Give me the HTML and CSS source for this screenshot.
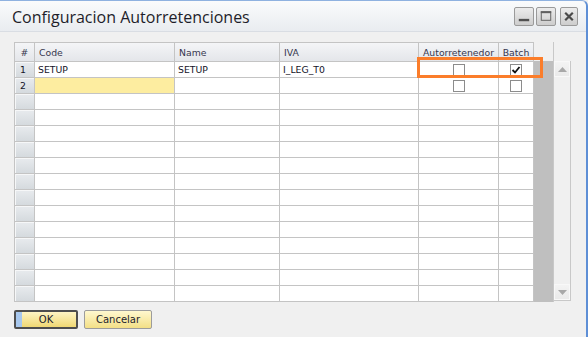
FILE: index.html
```html
<!DOCTYPE html>
<html lang="es">
<head>
  <meta charset="UTF-8" />
  <title>Configuracion Autorretenciones</title>
  <link rel="stylesheet" href="styles.css">
</head>
<body>
  <div class="window">
    <div class="titlebar">
      <span class="title">Configuracion Autorretenciones</span>
      <div class="win-buttons">
        <span class="win-btn"><svg width="19" height="19" viewBox="0 0 19 19"><rect x="4" y="12" width="11" height="2.5" fill="#505050"/></svg></span>
        <span class="win-btn"><svg width="19" height="19" viewBox="0 0 19 19"><rect x="4.5" y="4.5" width="10" height="9" fill="none" stroke="#606060" stroke-width="1"/><rect x="4" y="4" width="11" height="2" fill="#606060"/></svg></span>
        <span class="win-btn close"><svg width="19" height="19" viewBox="0 0 19 19"><path d="M5 5 L14 14 M14 5 L5 14" stroke="#4a4a4a" stroke-width="2.6"/></svg></span>
      </div>
    </div>

    <div class="content">
      <div class="grid-wrap">
        <div class="grid" id="grid">
          <div class="hd num">#</div>
          <div class="hd">Code</div>
          <div class="hd">Name</div>
          <div class="hd">IVA</div>
          <div class="hd center">Autorretenedor</div>
          <div class="hd center">Batch</div>

          <div class="rn">1</div>
          <div class="cell">SETUP</div>
          <div class="cell">SETUP</div>
          <div class="cell">I_LEG_T0</div>
          <div class="cell center"><span class="chk"></span></div>
          <div class="cell center"><span class="chk"><svg width="10" height="10" viewBox="0 0 10 10"><path d="M1.5 5 L4 7.5 L8.5 2" fill="none" stroke="#111" stroke-width="1.8"/></svg></span></div>

          <div class="rn">2</div>
          <div class="cell active"></div>
          <div class="cell"></div>
          <div class="cell"></div>
          <div class="cell center"><span class="chk"></span></div>
          <div class="cell center"><span class="chk"></span></div>
        </div>

        <div class="filler">
          <div class="filler-head"></div>
          <div class="filler-body"></div>
        </div>

        <div class="scroll-col">
          <div class="scroll-head"></div>
          <div class="scrollbar">
            <div class="sb-btn"><svg width="9" height="5" viewBox="0 0 9 5"><path d="M0 5 L4.5 0 L9 5 Z" fill="#a8a8a8"/></svg></div>
            <div class="sb-track"></div>
            <div class="sb-btn"><svg width="9" height="5" viewBox="0 0 9 5"><path d="M0 0 L9 0 L4.5 5 Z" fill="#a8a8a8"/></svg></div>
          </div>
        </div>

        <div class="highlight"></div>
      </div>

      <div class="actions">
        <button class="btn ok">OK</button>
        <button class="btn">Cancelar</button>
      </div>
    </div>
  </div>

  <script>
    // fill the rest of the matrix with empty rows
    const grid = document.getElementById("grid");
    for (let i = 3; i <= 15; i++) {
      grid.insertAdjacentHTML("beforeend",
        '<div class="rn"></div><div class="cell"></div><div class="cell"></div>' +
        '<div class="cell"></div><div class="cell"></div><div class="cell"></div>');
    }
  </script>
</body>
</html>
```

FILE: styles.css
```css
html, body {
  margin: 0;
  padding: 0;
}

body {
  width: 588px;
  height: 337px;
  overflow: hidden;
  background-color: #f0f0f0;
}

.window {
  box-sizing: border-box;
  width: 588px;
  height: 337px;
  background-color: #f0f0f0;
  border-top: 1px solid #8fb2e0;
  border-right: 2px solid #5e8fd6;
  border-top-right-radius: 6px;
  font-family: "DejaVu Sans", Tahoma, sans-serif;
  font-size: 9.3px;
  color: #141428;
}

.titlebar {
  height: 30px;
  display: flex;
  align-items: center;
  justify-content: space-between;
  padding: 0 8px 0 12px;
  background: linear-gradient(#fafbfc, #e9ecf0);
  border-bottom: 1px solid #d9dde3;
  border-top-right-radius: 6px;
}

.title {
  font-family: "Open Sans", sans-serif;
  font-size: 16px;
  color: #1e1e2a;
  margin-top: 1px;
}

.win-buttons {
  display: flex;
  gap: 2px;
  margin-top: 1px;
}

.win-btn {
  box-sizing: border-box;
  width: 20px;
  height: 19px;
  border: 1px solid #9a9a9a;
  border-radius: 2px;
  background: linear-gradient(#ececec, #cdcdcd);
  display: flex;
  align-items: center;
  justify-content: center;
}

.win-btn svg {
  display: block;
}

.win-btn.close {
  width: 18px;
  margin-left: 2px;
}

.content {
  padding: 10px 0 0 14px;
}

.grid-wrap {
  display: flex;
  position: relative;
}

.grid {
  display: grid;
  grid-template-columns: 20px 140px 105px 139px 80px 35px;
  grid-auto-rows: 16px;
  grid-template-rows: 19px;
  border-left: 1px solid #c4c4c4;
  border-top: 1px solid #c4c4c4;
  background-color: #ffffff;
}

.grid > div {
  box-sizing: border-box;
  border-right: 1px solid #c4c4c4;
  border-bottom: 1px solid #c4c4c4;
  display: flex;
  align-items: center;
  white-space: nowrap;
  overflow: hidden;
}

.hd {
  background: linear-gradient(#f4f5f7, #e4e6ea);
  color: #36364e;
  padding-left: 4px;
}

.hd.num {
  justify-content: center;
  padding-left: 0;
}

.center {
  justify-content: center;
  padding-left: 0 !important;
}

.rn {
  background: linear-gradient(#e8ebee, #d5dade);
  box-shadow: inset 1px 1px 0 #f6f7f8;
  padding-left: 5px;
}

.cell {
  padding-left: 3px;
}

.cell.active {
  background-color: #fdeda0;
}

.chk {
  box-sizing: border-box;
  width: 12px;
  height: 12px;
  border: 1px solid #8c8c8c;
  background-color: #ffffff;
  display: flex;
  align-items: center;
  justify-content: center;
}

.chk svg {
  display: block;
}

.filler {
  width: 19px;
  border-top: 1px solid #f0f0f0;
  display: flex;
  flex-direction: column;
}

.filler-head {
  height: 18px;
}

.filler-body {
  flex: 1;
  background-color: #bfbfbf;
}

.scroll-col {
  width: 17px;
  border-left: 1px solid #c8c8c8;
  display: flex;
  flex-direction: column;
}

.scroll-head {
  height: 19px;
}

.scrollbar {
  flex: 1;
  margin-bottom: 1px;
  border-right: 1px solid #c8c8c8;
  border-bottom: 1px solid #c8c8c8;
  display: flex;
  flex-direction: column;
  background-color: #f0f0f0;
}

.sb-btn {
  height: 16px;
  display: flex;
  align-items: center;
  justify-content: center;
  background: linear-gradient(#f4f4f4, #e9e9e9);
  box-shadow: inset 0 0 0 1px #f8f8f8;
}

.sb-track {
  flex: 1;
}

.highlight {
  position: absolute;
  left: 403px;
  top: 15px;
  width: 126px;
  height: 21px;
  box-sizing: border-box;
  border: 3px solid #fb7d2a;
}

.actions {
  display: flex;
  gap: 6px;
  margin-top: 8px;
}

.btn {
  box-sizing: border-box;
  height: 19px;
  width: 68px;
  padding: 0;
  font-family: "DejaVu Sans", Tahoma, sans-serif;
  font-size: 10px;
  color: #1c1c2c;
  border: 1px solid #9c9c9c;
  border-radius: 2px;
  background: linear-gradient(#fff8cf, #f3df86);
}

.btn.ok {
  width: 64px;
  border: 2px solid #4e4e4e;
  background: linear-gradient(90deg, #a8c8ee 0, #a8c8ee 6px, transparent 6px),
              linear-gradient(#fff5c4, #f0d873);
}
```
